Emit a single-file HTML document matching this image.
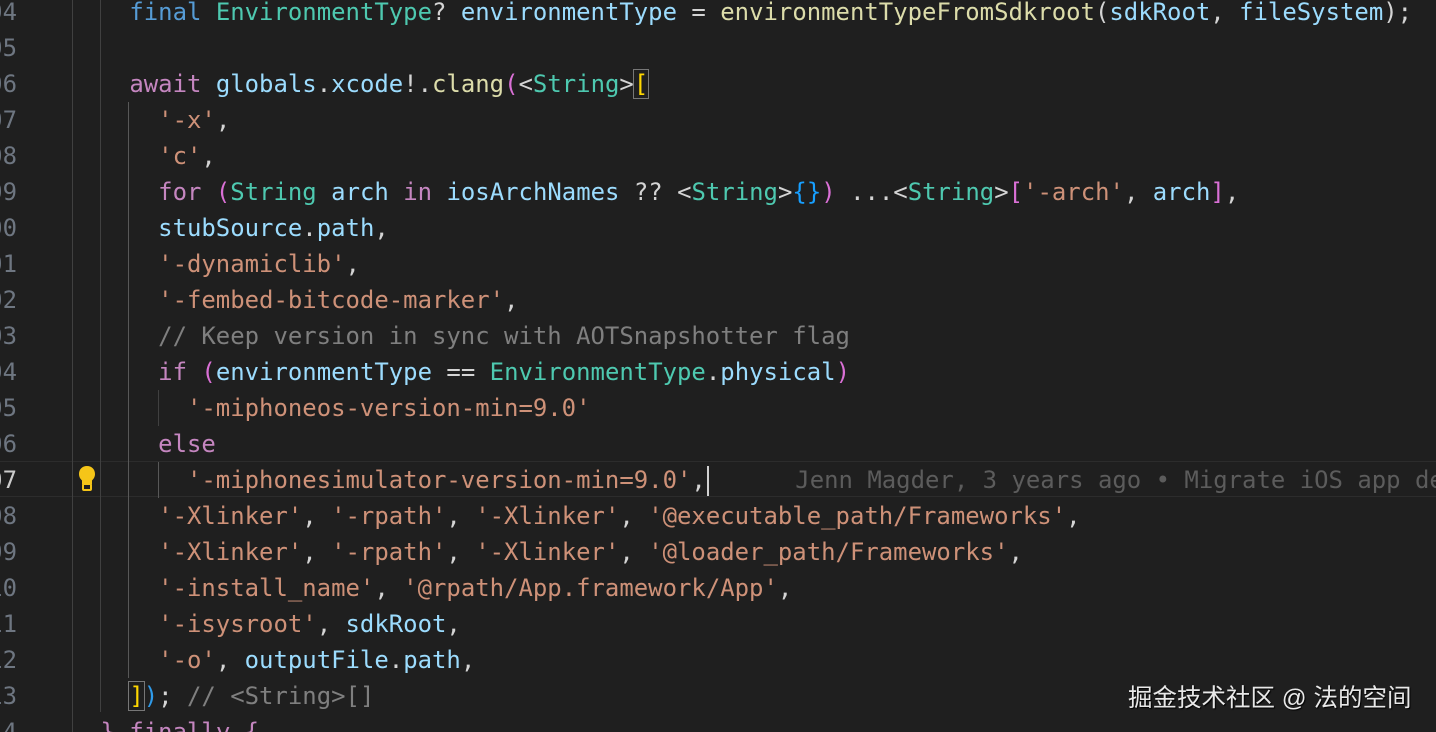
<!DOCTYPE html>
<html><head><meta charset="utf-8"><style>
html,body{margin:0;padding:0;background:#1f1f1f;width:1436px;height:732px;overflow:hidden;position:relative}
.l{position:absolute;left:100.5px;height:36px;line-height:36px;white-space:pre;font-family:"DejaVu Sans Mono","Liberation Mono",monospace;font-size:23.95px;color:#d4d4d4}
.n{position:absolute;left:-40px;width:57px;text-align:right;height:36px;line-height:36px;font-family:"DejaVu Sans Mono","Liberation Mono",monospace;font-size:23.95px;color:#6e7681}
.g{position:absolute;width:1px;background:#404040}
.k{color:#569cd6}.c{color:#c586c0}.t{color:#4ec9b0}.v{color:#9cdcfe}.f{color:#dcdcaa}.s{color:#ce9178}.m{color:#7f7f7f}.p{color:#da70d6}.y{color:#ffd700}.b{color:#179fff}
</style></head><body>
<div style="position:absolute;left:0;top:461px;width:1436px;height:34px;border-top:1px solid #2c2c2c;border-bottom:1px solid #2c2c2c;background:#1f1f1f"></div>
<div class="g" style="left:72px;top:0;height:732px"></div>
<div class="g" style="left:100px;top:0;height:712px"></div>
<div class="g" style="left:128px;top:102px;height:576px;background:#585858"></div>
<div class="g" style="left:158px;top:390px;height:36px"></div>
<div class="g" style="left:158px;top:462px;height:36px;background:#585858"></div>

<div class="n" style="top:-6px">04</div><div class="l" style="top:-6px">  <span class="k">final</span> <span class="t">EnvironmentType</span>? <span class="v">environmentType</span> = <span class="f">environmentTypeFromSdkroot</span>(<span class="v">sdkRoot</span>, <span class="v">fileSystem</span>);</div>
<div class="n" style="top:30px">05</div>
<div class="n" style="top:66px">06</div><div class="l" style="top:66px">  <span class="c">await</span> <span class="v">globals</span>.<span class="v">xcode</span>!.<span class="f">clang</span><span class="p">(</span>&lt;<span class="t">String</span>&gt;<span class="y" style="outline:1px solid #777">[</span></div>
<div class="n" style="top:102px">07</div><div class="l" style="top:102px">    <span class="s">'-x'</span>,</div>
<div class="n" style="top:138px">08</div><div class="l" style="top:138px">    <span class="s">'c'</span>,</div>
<div class="n" style="top:174px">09</div><div class="l" style="top:174px">    <span class="c">for</span> <span class="p">(</span><span class="t">String</span> <span class="v">arch</span> <span class="c">in</span> <span class="v">iosArchNames</span> ?? &lt;<span class="t">String</span>&gt;<span class="b">{}</span><span class="p">)</span> ...&lt;<span class="t">String</span>&gt;<span class="p">[</span><span class="s">'-arch'</span>, <span class="v">arch</span><span class="p">]</span>,</div>
<div class="n" style="top:210px">00</div><div class="l" style="top:210px">    <span class="v">stubSource</span>.<span class="v">path</span>,</div>
<div class="n" style="top:246px">01</div><div class="l" style="top:246px">    <span class="s">'-dynamiclib'</span>,</div>
<div class="n" style="top:282px">02</div><div class="l" style="top:282px">    <span class="s">'-fembed-bitcode-marker'</span>,</div>
<div class="n" style="top:318px">03</div><div class="l" style="top:318px">    <span class="m">// Keep version in sync with AOTSnapshotter flag</span></div>
<div class="n" style="top:354px">04</div><div class="l" style="top:354px">    <span class="c">if</span> <span class="p">(</span><span class="v">environmentType</span> == <span class="t">EnvironmentType</span>.<span class="v">physical</span><span class="p">)</span></div>
<div class="n" style="top:390px">05</div><div class="l" style="top:390px">      <span class="s">'-miphoneos-version-min=9.0'</span></div>
<div class="n" style="top:426px">06</div><div class="l" style="top:426px">    <span class="c">else</span></div>
<div class="n" style="top:462px;color:#cccccc">07</div><div class="l" style="top:462px">      <span class="s">'-miphonesimulator-version-min=9.0'</span>,<span style="display:inline-block;width:2px;height:30px;background:#d0d0d0;vertical-align:middle;margin-left:1px"></span>      <span style="color:#5c5c5c">Jenn Magder, 3 years ago • Migrate iOS app de</span></div>
<div style="position:absolute;left:77px;top:465px;width:20px;height:26px">
<svg width="20" height="26" viewBox="0 0 20 26"><path d="M10 1C5 1 2 4.5 2 9c0 3 1.5 5 3 6.5V19h10v-3.5c1.5-1.5 3-3.5 3-6.5 0-4.5-3-8-8-8z" fill="#f5c518"/><rect x="6" y="19" width="8" height="6" rx="1" fill="none" stroke="#f5c518" stroke-width="2"/></svg></div>
<div class="n" style="top:498px">08</div><div class="l" style="top:498px">    <span class="s">'-Xlinker'</span>, <span class="s">'-rpath'</span>, <span class="s">'-Xlinker'</span>, <span class="s">'@executable_path/Frameworks'</span>,</div>
<div class="n" style="top:534px">09</div><div class="l" style="top:534px">    <span class="s">'-Xlinker'</span>, <span class="s">'-rpath'</span>, <span class="s">'-Xlinker'</span>, <span class="s">'@loader_path/Frameworks'</span>,</div>
<div class="n" style="top:570px">10</div><div class="l" style="top:570px">    <span class="s">'-install_name'</span>, <span class="s">'@rpath/App.framework/App'</span>,</div>
<div class="n" style="top:606px">11</div><div class="l" style="top:606px">    <span class="s">'-isysroot'</span>, <span class="v">sdkRoot</span>,</div>
<div class="n" style="top:642px">12</div><div class="l" style="top:642px">    <span class="s">'-o'</span>, <span class="v">outputFile</span>.<span class="v">path</span>,</div>
<div class="n" style="top:678px">13</div><div class="l" style="top:678px">  <span class="y" style="outline:1px solid #777">]</span><span class="p" style="color:#2f9bea">)</span>; <span class="m">// &lt;String&gt;[]</span></div>
<div class="n" style="top:714px">14</div><div class="l" style="top:714px"><span class="c">}</span> <span class="c">finally</span> <span class="c">{</span></div>
<div style="position:absolute;left:1128px;top:679px;font-family:'Liberation Sans','Noto Sans CJK SC',sans-serif;font-size:24.5px;color:#e8e8e8;text-shadow:1px 1px 1px #000;white-space:pre">掘金技术社区 @ 法的空间</div>
</body></html>
